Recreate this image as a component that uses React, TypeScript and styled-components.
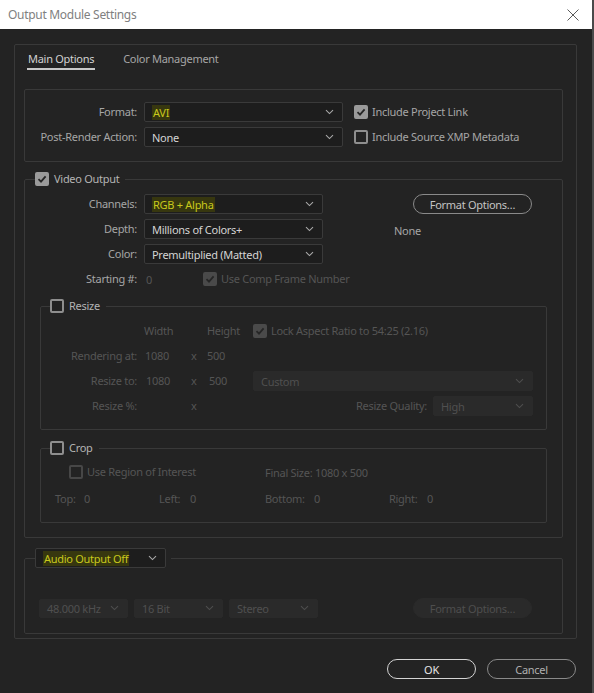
import React from 'react';
import styled, { createGlobalStyle } from 'styled-components';

const GlobalStyle = createGlobalStyle`
  html, body {
    margin: 0;
    padding: 0;
    background: #4a4a4a;
  }
  body {
    font-family: "Noto Sans", "Open Sans", sans-serif;
    font-size: 11px;
    letter-spacing: -0.28px;
    color: #a6a6a6;
  }
  * { box-sizing: border-box; }
`;

const Window = styled.div`
  width: 592px;
  height: 693px;
  display: flex;
  flex-direction: column;
  background: #232323;
`;

const TitleBar = styled.div`
  height: 29px;
  flex: none;
  background: #ffffff;
  display: flex;
  align-items: center;
  justify-content: space-between;
  padding: 0 13px 0 8px;
`;

const Title = styled.span`
  font-size: 12px;
  letter-spacing: -0.3px;
  color: #808080;
`;

const Body = styled.div`
  flex: 1;
  padding: 15px 15px 0 14px;
`;

const Panel = styled.div`
  border: 1px solid #393939;
  border-radius: 2px;
  padding: 0 13px 4px 9px;
`;

const TabBar = styled.div`
  display: flex;
  gap: 27px;
  margin-left: 3px;
`;

const Tab = styled.div<{ $active?: boolean }>`
  padding: 6px 1px 1px;
  line-height: 16px;
  border-bottom: 2px solid ${({ $active }) => ($active ? '#c8c8c8' : 'transparent')};
  color: ${({ $active }) => ($active ? '#d2d2d2' : '#a6a6a6')};
`;

const Box = styled.div`
  margin-top: 19px;
  border: 1px solid #393939;
  border-radius: 2px;
  padding: 12px 0 14px;
  display: grid;
  grid-template-columns: 112px 199px auto;
  column-gap: 7px;
  row-gap: 5px;
  align-items: center;
`;

const Label = styled.span<{ $disabled?: boolean }>`
  text-align: right;
  line-height: 20px;
  white-space: nowrap;
  color: ${({ $disabled }) => ($disabled ? '#555555' : '#a6a6a6')};
`;

const Value = styled.span<{ $disabled?: boolean; $pad?: number }>`
  line-height: 20px;
  white-space: nowrap;
  padding-left: ${({ $pad }) => $pad ?? 0}px;
  color: ${({ $disabled }) => ($disabled ? '#555555' : '#a6a6a6')};
`;

const SelectBox = styled.div<{ $width?: number; $disabled?: boolean; $height?: number }>`
  width: ${({ $width }) => ($width ? `${$width}px` : '100%')};
  height: ${({ $height }) => $height ?? 20}px;
  border: 1px solid ${({ $disabled }) => ($disabled ? '#2a2a2a' : '#3a3a3a')};
  background: ${({ $disabled }) => ($disabled ? '#2a2a2a' : '#1d1d1d')};
  border-radius: 2px;
  display: flex;
  align-items: center;
  justify-content: space-between;
  padding: 0 8px 0 7px;
  color: ${({ $disabled }) => ($disabled ? '#505050' : '#d4d4d4')};
  white-space: nowrap;
`;

const Highlight = styled.span`
  color: #c9c91c;
  background: #37370f;
  padding: 0 1px;
`;

const Chevron = ({ color }: { color: string }) => (
  <svg width="9" height="6" viewBox="0 0 9 6">
    <path d="M1 1.2 L4.5 4.6 L8 1.2" fill="none" stroke={color} strokeWidth="1.1" />
  </svg>
);

function Select({
  children,
  width,
  height,
  disabled,
}: {
  children: React.ReactNode;
  width?: number;
  height?: number;
  disabled?: boolean;
}) {
  return (
    <SelectBox $width={width} $height={height} $disabled={disabled}>
      <span>{children}</span>
      <Chevron color={disabled ? '#4e4e4e' : '#a8a8a8'} />
    </SelectBox>
  );
}

const CheckSquare = styled.span<{ $checked?: boolean; $disabled?: boolean }>`
  width: 14px;
  height: 14px;
  flex: none;
  border-radius: 2px;
  display: inline-flex;
  align-items: center;
  justify-content: center;
  border: 2px solid
    ${({ $checked, $disabled }) =>
      $disabled ? ($checked ? '#4a4a4a' : '#474747') : $checked ? '#9a9a9a' : '#8e8e8e'};
  background: ${({ $checked, $disabled }) =>
    $checked ? ($disabled ? '#4a4a4a' : '#9a9a9a') : 'transparent'};
`;

const CheckRow = styled.span<{ $width?: number; $gap?: number }>`
  display: inline-flex;
  flex: none;
  align-items: center;
  gap: ${({ $gap }) => $gap ?? 4}px;
  width: ${({ $width }) => ($width ? `${$width}px` : 'auto')};
  line-height: 16px;
  white-space: nowrap;
`;

const CheckText = styled.span<{ $disabled?: boolean; $bright?: boolean }>`
  color: ${({ $disabled, $bright }) => ($disabled ? '#555555' : $bright ? '#b4b4b4' : '#a6a6a6')};
`;

function Checkbox({
  label,
  checked,
  disabled,
  width,
  gap,
  bright,
}: {
  label: string;
  checked?: boolean;
  disabled?: boolean;
  width?: number;
  gap?: number;
  bright?: boolean;
}) {
  return (
    <CheckRow $width={width} $gap={gap}>
      <CheckSquare $checked={checked} $disabled={disabled}>
        {checked && (
          <svg width="10" height="10" viewBox="0 0 10 10">
            <path d="M1.5 5.2 L4 7.6 L8.6 2.4" fill="none" stroke="#262626" strokeWidth="1.8" />
          </svg>
        )}
      </CheckSquare>
      <CheckText $disabled={disabled} $bright={bright}>
        {label}
      </CheckText>
    </CheckRow>
  );
}

const CheckCell = styled.div`
  padding-left: 4px;
  display: flex;
  align-items: center;
`;

const Fieldset = styled.fieldset<{ $mt: number; $mx?: number; $pt: number; $pb: number }>`
  margin: ${({ $mt, $mx }) => `${$mt}px ${$mx ?? 0}px 0`};
  padding: ${({ $pt, $pb }) => `${$pt}px 0 ${$pb}px`};
  border: 1px solid #393939;
  border-radius: 2px;
  min-width: 0;
`;

const Legend = styled.legend<{ $ml: number }>`
  margin-left: ${({ $ml }) => $ml}px;
  padding: 0 6px 0 0;
  display: flex;
  align-items: center;
  height: 16px;
`;

const VideoTop = styled.div`
  display: flex;
`;

const VideoGrid = styled.div`
  display: grid;
  grid-template-columns: 112px 179px;
  column-gap: 7px;
  row-gap: 5px;
  align-items: center;
`;

const StartRow = styled.div`
  display: flex;
  align-items: center;
  padding-left: 2px;
`;

const RightColumn = styled.div`
  margin-left: 71px;
  display: flex;
  flex-direction: column;
`;

const PillButton = styled.button<{ $disabled?: boolean; $ml?: number }>`
  width: 119px;
  height: 20px;
  margin-left: ${({ $ml }) => $ml ?? 0}px;
  border-radius: 10px;
  font: inherit;
  letter-spacing: inherit;
  padding: 0;
  border: 1.5px solid ${({ $disabled }) => ($disabled ? '#2a2a2a' : '#8a8a8a')};
  background: ${({ $disabled }) => ($disabled ? '#2a2a2a' : 'transparent')};
  color: ${({ $disabled }) => ($disabled ? '#4e4e4e' : '#c4c4c4')};
`;

const NoneText = styled.span`
  margin-top: 9px;
  line-height: 16px;
  color: #a6a6a6;
`;

const ResizeGrid = styled.div`
  display: grid;
  grid-template-columns: 103px 44px 19px 46px 280px;
  row-gap: 5px;
  align-items: center;
`;

const GridLabel = styled(Label)`
  padding-right: 7px;
`;

const Times = styled.span`
  color: #555555;
  padding-left: 3px;
  line-height: 20px;
`;

const QualityCell = styled.div`
  display: flex;
  justify-content: flex-end;
  align-items: center;
  gap: 6px;
`;

const CropRow = styled.div<{ $pl: number }>`
  display: flex;
  align-items: center;
  height: 20px;
  padding-left: ${({ $pl }) => $pl}px;
`;

const CropField = styled.span<{ $width?: number }>`
  display: inline-flex;
  flex: none;
  width: ${({ $width }) => ($width ? `${$width}px` : 'auto')};
  color: #555555;
  white-space: nowrap;
`;

const CropLabel = styled.span<{ $width: number }>`
  width: ${({ $width }) => $width}px;
`;

const CropRows = styled.div`
  display: flex;
  flex-direction: column;
  gap: 6px;
`;

const AudioLegend = styled.legend`
  margin-left: 10px;
  padding: 0 5px 0 0;
`;

const AudioRow = styled.div`
  display: flex;
  align-items: center;
  gap: 6px;
  padding: 0 30px 0 14px;
`;

const Spacer = styled.div`
  flex: 1;
`;

const Footer = styled.div`
  display: flex;
  justify-content: flex-end;
  gap: 11px;
  margin-top: 20px;
  padding-right: 1px;
`;

const DialogButton = styled.button<{ $primary?: boolean }>`
  width: 89px;
  height: 20px;
  border-radius: 10px;
  padding: 0;
  font: inherit;
  letter-spacing: inherit;
  background: transparent;
  border: 1.5px solid ${({ $primary }) => ($primary ? '#d4d4d4' : '#8a8a8a')};
  color: ${({ $primary }) => ($primary ? '#e6e6e6' : '#b0b0b0')};
`;

export default function App() {
  return (
    <>
      <GlobalStyle />
      <Window>
        <TitleBar>
          <Title>Output Module Settings</Title>
          <svg width="12" height="12" viewBox="0 0 12 12">
            <path d="M0.5 0.5 L11.5 11.5 M11.5 0.5 L0.5 11.5" stroke="#5a5a5a" strokeWidth="1" />
          </svg>
        </TitleBar>
        <Body>
          <Panel>
            <TabBar>
              <Tab $active>Main Options</Tab>
              <Tab>Color Management</Tab>
            </TabBar>

            <Box>
              <Label>Format:</Label>
              <Select>
                <Highlight>AVI</Highlight>
              </Select>
              <CheckCell>
                <Checkbox label="Include Project Link" checked />
              </CheckCell>
              <Label>Post-Render Action:</Label>
              <Select>None</Select>
              <CheckCell>
                <Checkbox label="Include Source XMP Metadata" />
              </CheckCell>
            </Box>

            <Fieldset $mt={9} $pt={7} $pb={14}>
              <Legend $ml={10}>
                <Checkbox label="Video Output" checked gap={5} bright />
              </Legend>
              <VideoTop>
                <VideoGrid>
                  <Label>Channels:</Label>
                  <Select>
                    <Highlight>RGB + Alpha</Highlight>
                  </Select>
                  <Label>Depth:</Label>
                  <Select>Millions of Colors+</Select>
                  <Label>Color:</Label>
                  <Select>Premultiplied (Matted)</Select>
                  <Label>Starting #:</Label>
                  <StartRow>
                    <CropField $width={57}>0</CropField>
                    <Checkbox label="Use Comp Frame Number" checked disabled />
                  </StartRow>
                </VideoGrid>
                <RightColumn>
                  <PillButton $ml={19}>Format Options…</PillButton>
                  <NoneText>None</NoneText>
                </RightColumn>
              </VideoTop>

              <Fieldset $mt={9} $mx={15} $pt={7} $pb={13}>
                <Legend $ml={9}>
                  <Checkbox label="Resize" gap={5} bright />
                </Legend>
                <ResizeGrid>
                  <span />
                  <Value $disabled>Width</Value>
                  <span />
                  <Value $disabled>Height</Value>
                  <Checkbox label="Lock Aspect Ratio to 54:25 (2.16)" checked disabled />

                  <GridLabel $disabled>Rendering at:</GridLabel>
                  <Value $disabled $pad={1}>1080</Value>
                  <Times>x</Times>
                  <Value $disabled>500</Value>
                  <span />

                  <GridLabel $disabled>Resize to:</GridLabel>
                  <Value $disabled $pad={2}>1080</Value>
                  <Times>x</Times>
                  <Value $disabled $pad={2}>500</Value>
                  <Select disabled>Custom</Select>

                  <GridLabel $disabled>Resize %:</GridLabel>
                  <span />
                  <Times>x</Times>
                  <span />
                  <QualityCell>
                    <Label $disabled>Resize Quality:</Label>
                    <Select width={100} disabled>
                      High
                    </Select>
                  </QualityCell>
                </ResizeGrid>
              </Fieldset>

              <Fieldset $mt={10} $mx={15} $pt={6} $pb={14}>
                <Legend $ml={9}>
                  <Checkbox label="Crop" gap={5} bright />
                </Legend>
                <CropRows>
                  <CropRow $pl={28}>
                    <Checkbox label="Use Region of Interest" disabled width={196} />
                    <CropField>Final Size: 1080 x 500</CropField>
                  </CropRow>
                  <CropRow $pl={14}>
                    <CropField $width={104}>
                      <CropLabel $width={29}>Top:</CropLabel>0
                    </CropField>
                    <CropField $width={106}>
                      <CropLabel $width={31}>Left:</CropLabel>0
                    </CropField>
                    <CropField $width={124}>
                      <CropLabel $width={49}>Bottom:</CropLabel>0
                    </CropField>
                    <CropField>
                      <CropLabel $width={38}>Right:</CropLabel>0
                    </CropField>
                  </CropRow>
                </CropRows>
              </Fieldset>
            </Fieldset>

            <Fieldset $mt={10} $pt={30} $pb={15}>
              <AudioLegend>
                <Select width={131}>
                  <Highlight>Audio Output Off</Highlight>
                </Select>
              </AudioLegend>
              <AudioRow>
                <Select width={89} height={19} disabled>
                  48.000 kHz
                </Select>
                <Select width={89} height={19} disabled>
                  16 Bit
                </Select>
                <Select width={89} height={19} disabled>
                  Stereo
                </Select>
                <Spacer />
                <PillButton $disabled>Format Options…</PillButton>
              </AudioRow>
            </Fieldset>
          </Panel>

          <Footer>
            <DialogButton $primary>OK</DialogButton>
            <DialogButton>Cancel</DialogButton>
          </Footer>
        </Body>
      </Window>
    </>
  );
}
